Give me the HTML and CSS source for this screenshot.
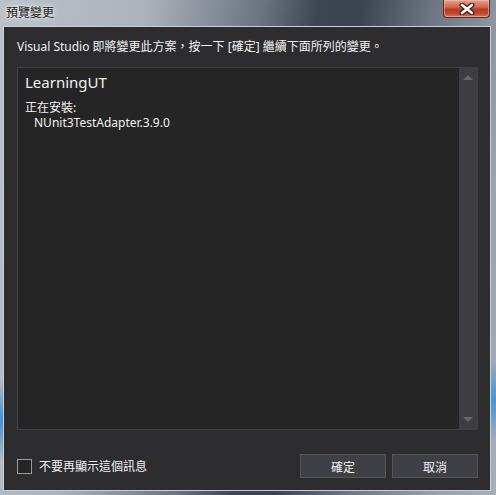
FILE: index.html
```html
<!DOCTYPE html>
<html lang="zh-Hant">
<head>
<meta charset="utf-8">
<link rel="stylesheet" href="styles.css">
</head>
<body>
<div class="window">
  <div class="titlebar">
    <span class="title">預覽變更</span>
    <button class="close" aria-label="關閉">
      <svg width="16" height="12" viewBox="0 0 16 12"><path d="M3 2 L13 10 M13 2 L3 10" stroke="#3a2020" stroke-width="5" stroke-linecap="round"/><path d="M3 2 L13 10 M13 2 L3 10" stroke="#fff" stroke-width="2.6" stroke-linecap="round"/></svg>
    </button>
  </div>
  <div class="client">
    <p class="message">Visual Studio 即將變更此方案，按一下 [確定] 繼續下面所列的變更。</p>
    <div class="listbox">
      <div class="list-content">
        <div class="project">LearningUT</div>
        <div class="section">正在安裝:</div>
        <div class="item">NUnit3TestAdapter.3.9.0</div>
      </div>
      <div class="scrollbar">
        <span class="arrow up"></span>
        <span class="arrow down"></span>
      </div>
    </div>
    <div class="footer">
      <label class="check"><span class="box"></span><span>不要再顯示這個訊息</span></label>
      <div class="buttons">
        <button class="btn">確定</button>
        <button class="btn">取消</button>
      </div>
    </div>
  </div>
</div>
</body>
</html>
```

FILE: styles.css
```css
html, body {
  margin: 0;
  padding: 0;
}
body {
  width: 496px;
  height: 495px;
  overflow: hidden;
  font-family: "Noto Sans", "Noto Sans CJK TC", sans-serif;
}
.window {
  width: 496px;
  height: 495px;
  display: flex;
  flex-direction: column;
  background:
    radial-gradient(ellipse 10px 40px at 2px 420px, rgba(40,140,220,0.9), rgba(40,140,220,0) 100%),
    radial-gradient(ellipse 10px 40px at 494px 400px, rgba(40,140,220,0.8), rgba(40,140,220,0) 100%),
    linear-gradient(100deg, #bcc1c8 0%, #adb3bc 25%, #6b7480 45%, #3c4552 55%, #3a4350 62%, #6f7884 75%, #9aa2ad 90%, #a7aeb8 100%);
  box-sizing: border-box;
}
.titlebar {
  height: 26px;
  display: flex;
  align-items: flex-start;
  justify-content: space-between;
  flex: none;
}
.title {
  margin: 4px 0 0 6px;
  font-family: "Noto Sans CJK TC", sans-serif;
  font-size: 12px;
  line-height: 16px;
  color: #1a1a1a;
  text-shadow: 0 0 6px rgba(255,255,255,0.9), 0 0 3px rgba(255,255,255,0.8);
}
.close {
  margin: 0 6px 0 0;
  width: 47px;
  height: 18px;
  padding: 0;
  border: 1px solid #5a2a24;
  border-top: none;
  border-radius: 0 0 4px 4px;
  background: linear-gradient(#e0a090 0%, #d26a52 40%, #b83a22 55%, #c24a2e 80%, #d87a60 100%);
  box-shadow: inset 0 0 0 1px rgba(255,200,180,0.5);
  display: flex;
  align-items: center;
  justify-content: center;
}
.close svg { display: block; }
.client {
  flex: 1;
  margin: 0 5px 4px 3px;
  border: 1px solid #c8cfd8;
  background: #2d2d30;
  display: flex;
  flex-direction: column;
  padding: 0 12px 0 13px;
  color: #f1f1f1;
}
.message {
  margin: 11px 0 0 0;
  font-size: 12px;
  line-height: 18px;
  height: 18px;
  white-space: nowrap;
  letter-spacing: 0;
}
.listbox {
  margin-top: 11px;
  height: 363px;
  box-sizing: border-box;
  border: 1px solid #3f3f46;
  background: #252526;
  display: flex;
}
.list-content {
  flex: 1;
  padding: 4px 7px;
}
.project {
  font-size: 15px;
  line-height: 20px;
  margin-top: 0;
}
.section {
  margin-top: 7px;
  font-size: 12px;
  line-height: 16px;
  font-family: "Noto Sans CJK TC", sans-serif;
}
.item {
  font-size: 12px;
  line-height: 16px;
  padding-left: 9px;
}
.scrollbar {
  width: 18px;
  background: #3e3e42;
  display: flex;
  flex-direction: column;
  justify-content: space-between;
  align-items: center;
  padding: 7px 0 7px;
}
.arrow {
  width: 0;
  height: 0;
  border-left: 5px solid transparent;
  border-right: 5px solid transparent;
}
.arrow.up { border-bottom: 5px solid #686868; }
.arrow.down { border-top: 5px solid #686868; }
.footer {
  margin-top: 24px;
  display: flex;
  align-items: center;
  justify-content: space-between;
}
.check {
  display: flex;
  align-items: center;
  gap: 7px;
  font-family: "Noto Sans CJK TC", sans-serif;
  font-size: 12px;
  line-height: 16px;
}
.box {
  width: 13px;
  height: 13px;
  border: 1px solid #999999;
  background: #252526;
}
.buttons {
  display: flex;
  gap: 6px;
}
.btn {
  width: 86px;
  height: 24px;
  box-sizing: border-box;
  border: 1px solid #555558;
  background: #3f3f46;
  color: #f1f1f1;
  font-family: "Noto Sans CJK TC", sans-serif;
  font-size: 12px;
  padding: 0;
}
```
